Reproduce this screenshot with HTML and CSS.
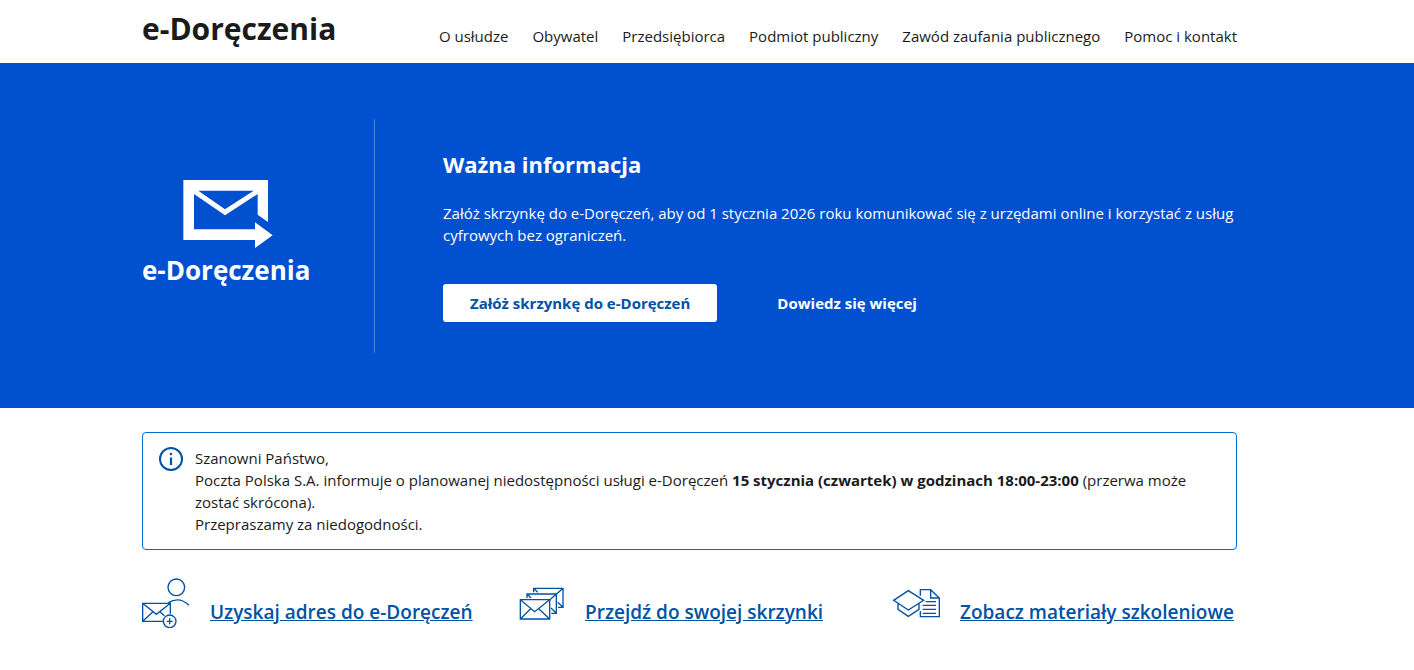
FILE: index.html
```html
<!DOCTYPE html>
<html lang="pl">
<head>
<meta charset="utf-8">
<meta name="viewport" content="width=device-width, initial-scale=1">
<title>e-Doręczenia</title>
<link rel="stylesheet" href="styles.css">
</head>
<body>
<header class="container header">
  <a class="brand" href="#">e-Doręczenia</a>
  <nav class="nav" aria-label="Menu główne">
    <a href="#">O usłudze</a>
    <a href="#">Obywatel</a>
    <a href="#">Przedsiębiorca</a>
    <a href="#">Podmiot publiczny</a>
    <a href="#">Zawód zaufania publicznego</a>
    <a href="#">Pomoc i kontakt</a>
  </nav>
</header>
<main>
  <section class="hero">
    <div class="container hero-inner">
      <div class="hero-logo">
        <svg class="hero-mark" viewBox="0 0 268 204" aria-hidden="true">
          <path fill="#fff" fill-rule="evenodd" d="M0 0H254V126L223 104V42L125 106L32 42V148H215V127L268 166L215 204V180H0ZM45 32H211L125 88Z"/>
        </svg>
        <span class="hero-name">e-Doręczenia</span>
      </div>
      <div class="hero-content">
        <h1 class="hero-title">Ważna informacja</h1>
        <p class="hero-text">Załóż skrzynkę do e-Doręczeń, aby od 1 stycznia 2026 roku komunikować się z urzędami online i korzystać z usług cyfrowych bez ograniczeń.</p>
        <div class="hero-actions">
          <a class="button button-primary" href="#">Załóż skrzynkę do e-Doręczeń</a>
          <a class="button" href="#">Dowiedz się więcej</a>
        </div>
      </div>
    </div>
  </section>
  <div class="container">
    <section class="notice">
      <svg class="notice-icon" viewBox="0 0 24 24" aria-hidden="true">
        <circle cx="12" cy="12" r="11" fill="none" stroke="#0052a5" stroke-width="2"/>
        <circle cx="12" cy="7" r="1.3" fill="#0052a5"/>
        <path d="M12 10.5V18" stroke="#0052a5" stroke-width="2.2"/>
      </svg>
      <p class="notice-text">Szanowni Państwo,<br>Poczta Polska S.A. informuje o planowanej niedostępności usługi e-Doręczeń <strong>15 stycznia (czwartek) w godzinach 18:00-23:00</strong> (przerwa może zostać skrócona).<br>Przepraszamy za niedogodności.</p>
    </section>
    <div class="links">
      <a class="link" href="#">
        <svg class="link-icon" viewBox="0 0 144 150" aria-hidden="true">
          <circle cx="103" cy="28" r="25"/>
          <path d="M79 74Q112 54 141 82M64 130H2V76H85V107M2 76L43 109L85 76M2 130L33 101M54 101L67 113"/>
          <circle cx="83" cy="130" r="19"/>
          <path d="M83 121V139M74 130H92"/>
        </svg>
        <span class="link-label">Uzyskaj adres do e-Doręczeń</span>
      </a>
      <a class="link" href="#">
        <svg class="link-icon" viewBox="0 0 144 150" aria-hidden="true">
          <path d="M10 65H98V123H10ZM10 65L53 101L98 65M10 123L41 92M65 92L98 123"/>
          <path d="M30 60V48H118V106H103M30 48L42 60M118 48L98 66M102 90L118 106"/>
          <path d="M50 43V31H138V88H123M50 31L62 43M138 31L118 49M122 73L138 88"/>
        </svg>
        <span class="link-label">Przejdź do swojej skrzynki</span>
      </a>
      <a class="link" href="#">
        <svg class="link-icon" viewBox="0 0 144 150" aria-hidden="true">
          <path d="M49 38L95 67L49 96L5 67ZM18 77V94L49 115L81 94V77M85 53V35H116L142 60V116H85V99M116 35V60H142M101 71H132M92 82H132M92 94H132M92 106H132"/>
        </svg>
        <span class="link-label">Zobacz materiały szkoleniowe</span>
      </a>
    </div>
  </div>
</main>
</body>
</html>
```
FILE: styles.css
```css
* {
  box-sizing: border-box;
}

body {
  margin: 0;
  background: #fff;
  color: #1b1b1b;
  font-family: "Open Sans", "Noto Sans", sans-serif;
  font-size: 15px;
  line-height: 22px;
}

h1,
p {
  margin: 0;
}

a {
  color: inherit;
  text-decoration: none;
}

.container {
  max-width: 1130px;
  margin: 0 auto;
  padding-right: 35px;
}

.header {
  display: flex;
  justify-content: space-between;
  align-items: flex-start;
  padding-top: 8px;
  padding-bottom: 13px;
}

.brand {
  font-size: 30px;
  font-weight: 700;
  line-height: 42px;
}

.nav {
  display: flex;
  gap: 24px;
  padding-top: 17px;
}

.hero {
  padding: 56px 0 55px;
  background: #0050d0;
  color: #fff;
}

.hero-inner {
  display: flex;
}

.hero-logo {
  display: flex;
  flex: 0 0 233px;
  flex-direction: column;
  justify-content: center;
  padding-bottom: 4px;
  border-right: 1px solid #4d85de;
}

.hero-mark {
  width: 90px;
  height: 68px;
  margin-left: 41px;
}

.hero-name {
  margin-top: 4px;
  font-size: 26px;
  font-weight: 700;
  line-height: 36px;
  white-space: nowrap;
}

.hero-content {
  flex: 1;
  padding: 29px 0 31px 68px;
}

.hero-title {
  font-size: 22px;
  line-height: 32px;
}

.hero-text {
  margin-top: 22px;
}

.hero-actions {
  display: flex;
  gap: 34px;
  margin-top: 38px;
}

.button {
  padding: 8px 26px;
  border-radius: 3px;
  font-weight: 700;
}

.button-primary {
  padding: 8px 27px;
  background: #fff;
  color: #0052a5;
}

.notice {
  display: flex;
  gap: 12px;
  margin-top: 24px;
  padding: 14px 16px;
  border: 1px solid #006dd5;
  border-radius: 4px;
}

.notice-icon {
  flex: none;
  width: 24px;
  height: 24px;
}

.links {
  display: grid;
  grid-template-columns: repeat(3, 1fr);
  gap: 30px;
  padding: 28px 0;
}

.link {
  display: flex;
  gap: 20px;
  color: #0052a5;
}

.link-icon {
  flex: none;
  width: 48px;
  height: 50px;
  fill: none;
  stroke: currentColor;
  stroke-width: 4;
}

.link-label {
  padding-top: 20px;
  font-size: 19px;
  font-weight: 600;
  line-height: 28px;
  text-decoration: underline;
  white-space: nowrap;
}
```
